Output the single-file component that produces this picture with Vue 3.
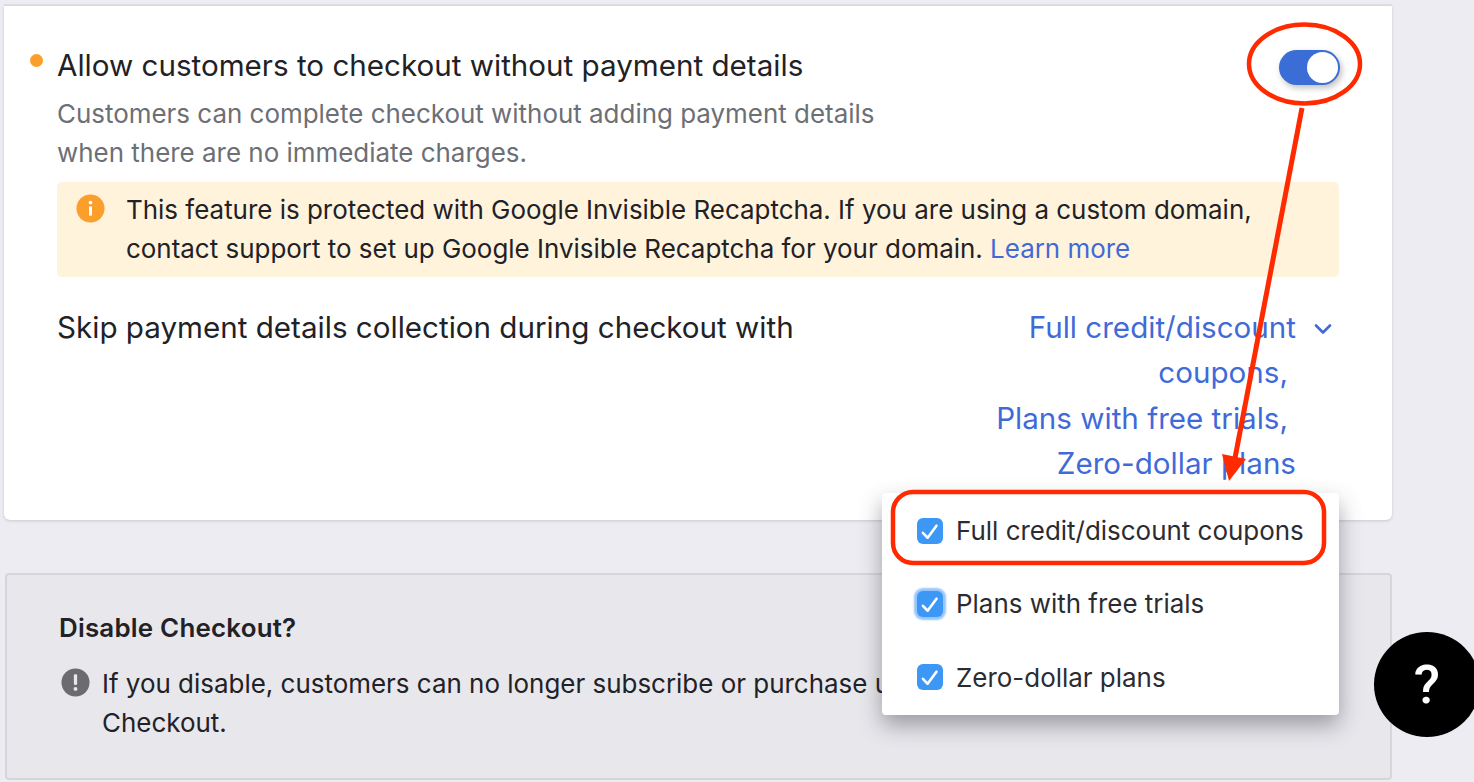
<template>
  <div class="page">
    <div class="top-rule"></div>

    <section class="card">
      <div class="title-row">
        <span class="dot"></span>
        <h2 class="title">Allow customers to checkout without payment details</h2>
        <span class="toggle"><span class="knob"></span></span>
      </div>
      <p class="desc">Customers can complete checkout without adding payment details<br />when there are no immediate charges.</p>

      <div class="notice">
        <svg class="notice-icon" viewBox="0 0 30 30">
          <circle cx="15" cy="15" r="14.5" fill="#fb9e2a" />
          <circle cx="15" cy="8.8" r="1.9" fill="#fff" />
          <rect x="13.5" y="12.8" width="3" height="9.6" rx="1" fill="#fff" />
        </svg>
        <p>This feature is protected with Google Invisible Recaptcha. If you are using a custom domain,<br />contact support to set up Google Invisible Recaptcha for your domain. <a class="link">Learn more</a></p>
      </div>

      <div class="skip-row">
        <span class="skip-label">Skip payment details collection during checkout with</span>
        <div class="skip-value">
          <div class="value-lines">
            <span>Full credit/discount</span>
            <span class="comma">coupons,</span>
            <span class="comma">Plans with free trials,</span>
            <span>Zero-dollar plans</span>
          </div>
          <svg class="chevron" viewBox="0 0 18 12">
            <path d="M2 2.5l7 7 7-7" fill="none" stroke="#3f6ad8" stroke-width="2.6" stroke-linecap="round" stroke-linejoin="round" />
          </svg>
        </div>
      </div>
    </section>

    <section class="disable-card">
      <h3>Disable Checkout?</h3>
      <div class="warn">
        <svg class="warn-icon" viewBox="0 0 30 30">
          <circle cx="15" cy="15" r="14.5" fill="#6c6c70" />
          <rect x="13.3" y="6.5" width="3.4" height="11" rx="1.2" fill="#e7e7ec" />
          <circle cx="15" cy="21.6" r="2" fill="#e7e7ec" />
        </svg>
        <p>If you disable, customers can no longer subscribe or purchase using<br />Checkout.</p>
      </div>
    </section>

    <div class="dropdown">
      <label v-for="opt in options" :key="opt.label" class="option">
        <span class="check" :class="{ focused: opt.focused }">
          <svg viewBox="0 0 22 22">
            <path d="M5 12.5l4 4.2L16.5 6.5" fill="none" stroke="#fff" stroke-width="2.2" stroke-linecap="round" stroke-linejoin="round" />
          </svg>
        </span>
        {{ opt.label }}
      </label>
    </div>

    <button class="help">?</button>

    <!-- red annotations drawn on top of the screenshot -->
    <svg class="marks" viewBox="0 0 1474 782">
      <ellipse cx="1304.5" cy="64" rx="55.5" ry="39.5" fill="none" stroke="#ff2a00" stroke-width="4.5" />
      <line x1="1302" y1="108" x2="1235" y2="458" stroke="#ff2a00" stroke-width="5" />
      <polygon points="1222,454 1246,459 1229,481" fill="#ff2a00" />
      <rect x="893" y="492" width="431" height="71" rx="20" fill="none" stroke="#ff2a00" stroke-width="4.5" />
    </svg>
  </div>
</template>

<script setup>
const options = [
  { label: 'Full credit/discount coupons' },
  { label: 'Plans with free trials', focused: true },
  { label: 'Zero-dollar plans' }
]
</script>

<style>
html, body {
  margin: 0;
  background: #edecf2;
}
</style>

<style scoped>
.page {
  position: relative;
  width: 1474px;
  height: 782px;
  overflow: hidden;
  padding: 4px 82px 0 4px;
  box-sizing: border-box;
  background: #edecf2;
  font-family: Inter, "Liberation Sans", sans-serif;
  color: #212126;
}

.top-rule {
  height: 2px;
  background: #dfdfe2;
}

.card {
  height: 514px;
  box-sizing: border-box;
  padding: 40px 53px 0 26px;
  background: #fff;
  border-radius: 0 0 6px 6px;
  box-shadow: 0 1px 3px rgba(40, 40, 60, 0.18);
}

.title-row {
  display: flex;
  align-items: center;
  height: 38px;
}

.dot {
  width: 13px;
  height: 13px;
  margin-right: 14px;
  margin-top: -9px;
  border-radius: 50%;
  background: #fb9e2a;
}

.title {
  flex: 1;
  margin: 0;
  font-size: 29.6px;
  font-weight: 400;
  line-height: 38px;
}

.toggle {
  width: 61px;
  height: 35px;
  margin: 4px -1px 0 0;
  display: flex;
  align-items: center;
  justify-content: flex-end;
  padding-right: 2px;
  box-sizing: border-box;
  border-radius: 18px;
  background: #3b6dd6;
  box-shadow: 2px 3px 6px rgba(0, 0, 0, 0.25);
}

.knob {
  width: 31px;
  height: 31px;
  border-radius: 50%;
  background: #fff;
}

.desc {
  margin: 10px 0 0 27px;
  font-size: 25.95px;
  line-height: 39px;
  color: #6c6f75;
}

.notice {
  display: flex;
  gap: 21px;
  margin: 10px 0 0 27px;
  padding: 8px 20px 9px 19px;
  height: 95px;
  box-sizing: border-box;
  border-radius: 5px;
  background: #fff3dc;
  font-size: 25.95px;
  line-height: 39px;
}

.notice p {
  margin: 0;
}

.notice-icon {
  width: 29px;
  height: 29px;
  margin-top: 4px;
  flex: none;
}

.link {
  color: #3f6ad8;
}

.skip-row {
  display: flex;
  justify-content: space-between;
  margin: 28px 0 0 27px;
}

.skip-label {
  font-size: 29.6px;
  line-height: 45px;
}

.skip-value {
  display: flex;
  align-items: flex-start;
  gap: 18px;
  padding-right: 7px;
  color: #3f6ad8;
  font-size: 29.6px;
  line-height: 45.4px;
  text-align: right;
}

.value-lines span {
  display: block;
}

.value-lines .comma {
  padding-right: 8px;
}

.chevron {
  width: 18px;
  height: 12px;
  margin-top: 18px;
}

.disable-card {
  height: 207px;
  margin: 53px 0 0 1px;
  padding: 35px 54px 0 52px;
  box-sizing: border-box;
  background: #e7e7ec;
  border: 2px solid #d6d6da;
  border-radius: 4px;
}

.disable-card h3 {
  margin: 0;
  font-size: 25.9px;
  font-weight: 600;
  letter-spacing: 0.22px;
  line-height: 36px;
}

.warn {
  display: flex;
  gap: 12px;
  margin-top: 18px;
  font-size: 25.95px;
  line-height: 39px;
}

.warn p {
  margin: 0;
}

.warn-icon {
  width: 29px;
  height: 29px;
  margin: 4px 0 0 2px;
  flex: none;
}

.dropdown {
  position: absolute;
  left: 882px;
  top: 493px;
  width: 457px;
  height: 222px;
  padding: 1px 0;
  box-sizing: border-box;
  display: flex;
  flex-direction: column;
  background: #fff;
  border-radius: 4px;
  box-shadow: 0 10px 22px rgba(60, 60, 70, 0.45);
}

.option {
  flex: 1;
  display: flex;
  align-items: center;
  gap: 13px;
  padding-left: 35px;
  font-size: 25.95px;
  color: #2c2c30;
}

.check {
  width: 26px;
  height: 26px;
  display: flex;
  border-radius: 6px;
  background: #3d97f5;
}

.check.focused {
  box-shadow: 0 0 2px 3px #94c5fb;
}

.help {
  position: absolute;
  left: 1374px;
  top: 632px;
  width: 106px;
  height: 105px;
  padding: 0;
  border: 0;
  border-radius: 50%;
  background: #000;
  color: #fff;
  font-family: Roboto, "Liberation Sans", sans-serif;
  font-size: 54px;
  font-weight: 500;
}

.marks {
  position: absolute;
  inset: 0;
  width: 1474px;
  height: 782px;
  pointer-events: none;
}
</style>
